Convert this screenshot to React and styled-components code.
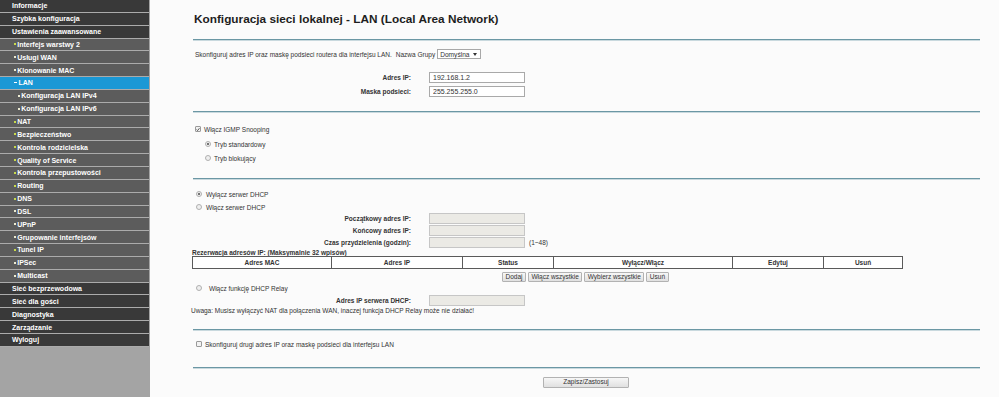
import React from 'react'
import styled, { createGlobalStyle } from 'styled-components'

const GlobalStyle = createGlobalStyle`
  html, body { margin: 0; padding: 0; }
  body {
    background: #fbfbfb;
    font-family: "Liberation Sans", Arial, sans-serif;
    color: #333;
  }
`

const MENU = [
    { t: 'Informacje', l: 0 },
    { t: 'Szybka konfiguracja', l: 0 },
    { t: 'Ustawienia zaawansowane', l: 0 },
    { t: 'Interfejs warstwy 2', l: 1, b: 'plus' },
    { t: 'Usługi WAN', l: 1, b: 'dot' },
    { t: 'Klonowanie MAC', l: 1, b: 'dot' },
    { t: 'LAN', l: 1, b: 'minus', active: true },
    { t: 'Konfiguracja LAN IPv4', l: 2, b: 'dot' },
    { t: 'Konfiguracja LAN IPv6', l: 2, b: 'dot' },
    { t: 'NAT', l: 1, b: 'plus' },
    { t: 'Bezpieczeństwo', l: 1, b: 'plus' },
    { t: 'Kontrola rodzicielska', l: 1, b: 'plus' },
    { t: 'Quality of Service', l: 1, b: 'plus' },
    { t: 'Kontrola przepustowości', l: 1, b: 'plus' },
    { t: 'Routing', l: 1, b: 'plus' },
    { t: 'DNS', l: 1, b: 'plus' },
    { t: 'DSL', l: 1, b: 'dot' },
    { t: 'UPnP', l: 1, b: 'dot' },
    { t: 'Grupowanie interfejsów', l: 1, b: 'dot' },
    { t: 'Tunel IP', l: 1, b: 'plus' },
    { t: 'IPSec', l: 1, b: 'dot' },
    { t: 'Multicast', l: 1, b: 'dot' },
    { t: 'Sieć bezprzewodowa', l: 0 },
    { t: 'Sieć dla gości', l: 0 },
    { t: 'Diagnostyka', l: 0 },
    { t: 'Zarządzanie', l: 0 },
    { t: 'Wyloguj', l: 0 },
]

const COLUMNS = [
    { t: 'Adres MAC', w: 139 },
    { t: 'Adres IP', w: 131 },
    { t: 'Status', w: 91 },
    { t: 'Wyłącz/Włącz', w: 179 },
    { t: 'Edytuj', w: 91 },
    { t: 'Usuń', w: 79 },
]

const Page = styled.div`
    display: flex;
    width: 999px;
    height: 397px;
    overflow: hidden;
`

const Sidebar = styled.nav`
    box-sizing: border-box;
    flex: none;
    width: 150px;
    padding-right: 1px;
    background: #a4a4a4;
`

const NavItem = styled.div`
    box-sizing: border-box;
    height: 12.85px;
    border-bottom: 1px solid #ababab;
    display: flex;
    align-items: center;
    padding-left: ${p => [12, 14, 18][p.$level]}px;
    background: ${p => p.$active ? '#1b98d5' : p.$level === 0 ? '#393939' : '#5c5c5c'};
    color: #fff;
    font-size: 7px;
    font-weight: bold;
    white-space: nowrap;
`

const Bullet = styled.span`
    flex: none;
    width: ${p => p.$kind === 'minus' ? 3 : 2}px;
    height: ${p => p.$kind === 'minus' ? 1 : 2}px;
    margin-right: ${p => p.$kind === 'minus' ? 1.5 : 1.2}px;
    background: ${p => p.$kind === 'plus' ? '#c7da4c' : p.$kind === 'minus' ? '#ffffff' : '#ecebd2'};
`

const Main = styled.main`
    flex: 1;
    padding: 12px 19px 0 43px;
    display: flex;
    flex-direction: column;
    font-size: 6.5px;
    min-width: 0;
`

const Title = styled.h1`
    flex: none;
    margin: 0 0 0 1px;
    height: 14px;
    font-size: 11.8px;
    line-height: 14px;
    font-weight: bold;
    color: #1e1e1e;
`

const Divider = styled.div`
    flex: none;
    height: 1px;
    margin-top: ${p => p.$top}px;
    background: #6b97a4;
    box-shadow: 0 1px 0 #c9d9de;
`

const Line = styled.div`
    flex: none;
    display: flex;
    align-items: center;
    height: ${p => p.$h || 10}px;
    margin-top: ${p => p.$top || 0}px;
    margin-left: ${p => p.$indent || 0}px;
    white-space: nowrap;
    font-weight: ${p => p.$bold ? 'bold' : 'normal'};
`

const FormRow = styled.div`
    flex: none;
    display: flex;
    align-items: center;
    height: 11px;
    margin-top: ${p => p.$top || 0}px;
    white-space: nowrap;
`

const Label = styled.span`
    width: 218px;
    text-align: right;
    font-weight: bold;
`

const Field = styled.input`
    box-sizing: border-box;
    width: 96px;
    height: 11px;
    margin: 0 0 0 18px;
    padding: 0 3px;
    border: 1px solid ${p => p.disabled ? '#c6c6c6' : '#a9a9a9'};
    background: ${p => p.disabled ? '#ebeae5' : '#ffffff'};
    font-family: inherit;
    font-size: 7px;
    color: #333;
    outline: none;
`

const Note = styled.span`
    margin-left: 4px;
`

const Select = styled.span`
    box-sizing: border-box;
    display: inline-flex;
    align-items: center;
    justify-content: space-between;
    width: 44px;
    height: 10px;
    margin-left: 2px;
    padding: 0 3px 0 2px;
    border: 1px solid #a8a8a8;
    background: #fff;
    font-size: 6.6px;
`

const Caret = styled.span`
    width: 0;
    height: 0;
    border-left: 2px solid transparent;
    border-right: 2px solid transparent;
    border-top: 3px solid #333;
`

const Check = styled.span`
    box-sizing: border-box;
    flex: none;
    width: 6px;
    height: 6px;
    margin-right: 3px;
    border: 1px solid #9a9a9a;
    border-radius: 1px;
    background: #f2f2f2;
    display: flex;
    align-items: center;
    justify-content: center;
`

const Radio = styled.span`
    box-sizing: border-box;
    flex: none;
    width: 6px;
    height: 6px;
    margin-right: ${p => p.$gap || 3}px;
    border: 1px solid #b0b0b0;
    border-radius: 50%;
    background: #efefef;
    display: flex;
    align-items: center;
    justify-content: center;
    &::after {
        content: '';
        display: ${p => p.$checked ? 'block' : 'none'};
        width: 2px;
        height: 2px;
        border-radius: 50%;
        background: #4a4a4a;
    }
`

const Table = styled.table`
    flex: none;
    width: 710px;
    margin-left: -1px;
    border-collapse: collapse;
    table-layout: fixed;
`

const Th = styled.th`
    box-sizing: border-box;
    width: ${p => p.$w}px;
    height: 12px;
    padding: 0;
    border: 1px solid #5a5a5a;
    background: #fff;
    font-size: 6.5px;
    font-weight: bold;
    color: #333;
    text-align: center;
`

const ButtonBar = styled.div`
    flex: none;
    display: flex;
    gap: 2px;
    height: 10px;
    margin-top: 3px;
    padding-left: 309px;
`

const Button = styled.button`
    box-sizing: border-box;
    height: ${p => p.$h || 10}px;
    width: ${p => p.$w ? p.$w + 'px' : 'auto'};
    margin-left: ${p => p.$left || 0}px;
    padding: 0 2.5px;
    border: 1px solid #b2b2b2;
    border-radius: 1px;
    background: linear-gradient(#f7f7f7, #e0e0e0);
    font-family: inherit;
    font-size: 6.5px;
    color: #333;
    line-height: 1;
`

const Footer = styled.div`
    flex: none;
    display: flex;
    margin-top: 9px;
`

function Tick() {
    return (
        <svg width="5" height="5" viewBox="0 0 5 5">
            <path d="M0.7 2.6 L2 3.8 L4.3 0.9" fill="none" stroke="#333" strokeWidth="1" />
        </svg>
    )
}

export default function App() {
    return (
        <Page>
            <GlobalStyle />
            <Sidebar>
                {MENU.map(m => (
                    <NavItem key={m.t} $level={m.l} $active={m.active}>
                        {m.b && <Bullet $kind={m.b} />}
                        {m.t}
                    </NavItem>
                ))}
            </Sidebar>
            <Main>
                <Title>Konfiguracja sieci lokalnej - LAN (Local Area Network)</Title>
                <Divider $top={13} />

                <Line $top={9} $indent={2}>
                    Skonfiguruj adres IP oraz maskę podsieci routera dla interfejsu LAN.
                    <span style={{ marginLeft: 4 }}>Nazwa Grupy</span>
                    <Select>Domyślna<Caret /></Select>
                </Line>
                <FormRow $top={13}>
                    <Label>Adres IP:</Label>
                    <Field readOnly value="192.168.1.2" />
                </FormRow>
                <FormRow $top={3}>
                    <Label>Maska podsieci:</Label>
                    <Field readOnly value="255.255.255.0" />
                </FormRow>
                <Divider $top={14} />

                <Line $top={12} $indent={2}>
                    <Check><Tick /></Check>Włącz IGMP Snooping
                </Line>
                <Line $top={5} $indent={12}>
                    <Radio $checked />Tryb standardowy
                </Line>
                <Line $top={4} $indent={12}>
                    <Radio />Tryb blokujący
                </Line>
                <Divider $top={15} />

                <Line $top={10} $indent={3}>
                    <Radio $checked $gap={4} />Wyłącz serwer DHCP
                </Line>
                <Line $top={3} $indent={3}>
                    <Radio $gap={4} />Włącz serwer DHCP
                </Line>
                <FormRow $top={1}>
                    <Label>Początkowy adres IP:</Label>
                    <Field disabled value="" readOnly />
                </FormRow>
                <FormRow $top={1}>
                    <Label>Końcowy adres IP:</Label>
                    <Field disabled value="" readOnly />
                </FormRow>
                <FormRow $top={1}>
                    <Label>Czas przydzielenia (godzin):</Label>
                    <Field disabled value="" readOnly />
                    <Note>(1~48)</Note>
                </FormRow>
                <Line $h={8} $indent={-1} $bold>
                    Rezerwacja adresów IP: (Maksymalnie 32 wpisów)
                </Line>
                <Table>
                    <thead>
                        <tr>
                            {COLUMNS.map(c => <Th key={c.t} $w={c.w}>{c.t}</Th>)}
                        </tr>
                    </thead>
                </Table>
                <ButtonBar>
                    <Button>Dodaj</Button>
                    <Button>Włącz wszystkie</Button>
                    <Button>Wybierz wszystkie</Button>
                    <Button>Usuń</Button>
                </ButtonBar>
                <Line $top={1} $indent={3}>
                    <Radio $gap={7} />Włącz funkcję DHCP Relay
                </Line>
                <FormRow $top={2}>
                    <Label>Adres IP serwera DHCP:</Label>
                    <Field disabled value="" readOnly />
                </FormRow>
                <Line $h={9} $indent={-2}>
                    Uwaga: Musisz wyłączyć NAT dla połączenia WAN, inaczej funkcja DHCP Relay może nie działać!
                </Line>
                <Divider $top={14} />

                <Line $top={9} $indent={3}>
                    <Check />Skonfiguruj drugi adres IP oraz maskę podsieci dla interfejsu LAN
                </Line>
                <Divider $top={18} />

                <Footer>
                    <Button $w={86} $h={11} $left={350}>Zapisz/Zastosuj</Button>
                </Footer>
            </Main>
        </Page>
    )
}
